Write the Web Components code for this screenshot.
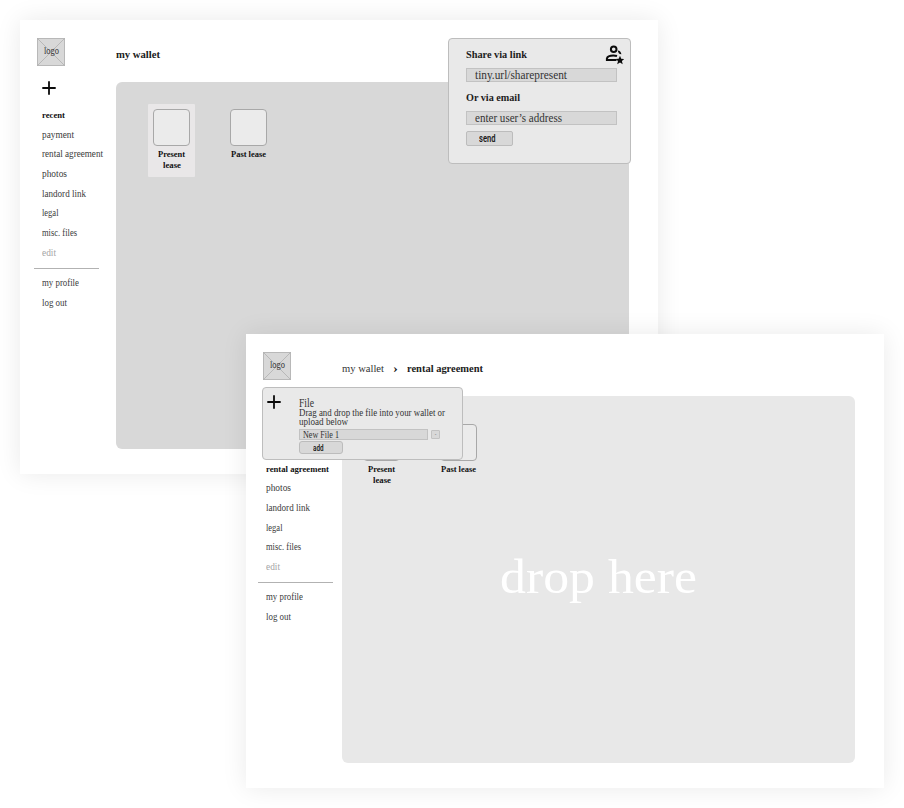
<!DOCTYPE html>
<html lang="en">
<head>
<meta charset="utf-8">
<title>my wallet</title>
<style>
html,body{margin:0;padding:0}
body{width:904px;height:808px;overflow:hidden;background:#fff;font-family:"Liberation Serif","Times New Roman",serif;color:#333}
wallet-desktop{display:block}
</style>
</head>
<body>
<wallet-desktop></wallet-desktop>
<script>
const define=(name,html,after)=>{
  const t=document.createElement('template');
  t.innerHTML=html;
  customElements.define(name,class extends HTMLElement{
    connectedCallback(){
      if(this.shadowRoot)return;
      this.attachShadow({mode:'open'}).append(t.content.cloneNode(true));
      if(after)after.call(this,this.shadowRoot);
    }
  });
};

/* A single line of text condensed or expanded to a set width. */
define('fit-text',`
<style>:host{display:block;white-space:nowrap;flex:none}span{display:inline-block;transform-origin:0 50%}</style>
<span><slot></slot></span>`,function(root){
  const w=+this.getAttribute('w'),s=+this.getAttribute('s'),span=root.querySelector('span');
  this.style.fontSize=s+'px';
  this.style.width=w+'px';
  span.style.transform='scaleX('+w/span.getBoundingClientRect().width+')';
});

define('wallet-logo',`
<style>
:host{display:grid;place-items:center;width:28px;height:28px;flex:none;line-height:12px}
svg,fit-text{grid-area:1/1}
fit-text{margin-bottom:2px}
</style>
<svg width="28" height="28" viewBox="0 0 28 28"><rect x=".5" y=".5" width="27" height="27" fill="#d8d8d8" stroke="#b8b8b8"/><path d="M.5.5l27 27M27.5.5l-27 27" stroke="#aaa" stroke-width=".7"/></svg>
<fit-text s="10" w="15">logo</fit-text>`);

define('plus-icon',`
<style>:host{display:block;width:14px;height:14px}svg{display:block}</style>
<svg width="14" height="14" viewBox="0 0 14 14"><path d="M7 .3v13.4M.3 7h13.4" stroke="#0b0b0b" stroke-width="1.8"/></svg>`);

define('share-icon',`
<style>:host{display:block;width:19px;height:20px}svg{display:block}</style>
<svg width="19" height="20" viewBox="0 0 19 20"><g fill="none" stroke="#0b0b0b" stroke-width="2"><circle cx="8.7" cy="4.3" r="2.8"/><path d="M11.5 14.9H1.9V13.4C2.4 11.4 5.4 10.4 8.4 10.4c1.4 0 2.5.2 3.6.6"/></g><path d="M12.8 5.4c2 .2 3.2 1.4 3.6 3.8-2.4-.1-3.2-1.6-3.6-3.8z" fill="#0b0b0b"/><path d="M15 10.8l1.2 3 3.2.2-2.5 2 .8 3.2-2.7-1.7-2.8 1.7.8-3.2-2.5-2 3.2-.2z" fill="#0b0b0b"/></svg>`);

define('nav-item',`
<style>
:host{display:block;height:19.7px;line-height:19.7px;color:#3a3a3a}
:host([active]){font-weight:bold;color:#111}
:host([muted]){color:#a5a5a5}
</style><slot></slot>`);

define('side-nav',`
<style>
:host{display:block;box-sizing:border-box;width:96px}
.g{padding-left:var(--inset,22px)}
hr{border:0;height:1px;background:#b2b2b2;margin:4px 0 5.5px var(--rule-start,14px);width:var(--rule,65px)}
</style>
<div class="g"><slot></slot></div><hr><div class="g"><slot name="account"></slot></div>`);

define('file-tile',`
<style>
:host{display:flex;flex-direction:column;align-items:center;width:47px;height:73px;box-sizing:border-box;padding-top:5px;font-weight:bold;color:#111;line-height:10.5px}
:host([selected]){background:#e9e7e8;border-radius:1px}
i{display:block;box-sizing:border-box;width:37px;height:37px;border:1px solid #a8a8a8;border-radius:4px;background:#ebebeb;margin-bottom:3px;flex:none}
</style>
<i></i><slot></slot>`);

define('wallet-window',`
<style>
:host{display:grid;grid-template-columns:96px 513px;grid-template-rows:62px 367px;width:638px;height:454px;background:#fff;box-shadow:0 0 24px rgba(0,0,0,.085)}
.logo{padding:17.5px 0 0 17px}
.crumbs{display:flex;align-items:center;padding-top:6px;line-height:14px;color:#333}
.nav{padding-top:var(--nav-top,0)}
.panel{display:flex;flex-direction:column;box-sizing:border-box;border-radius:6px;background:var(--panel,#d8d8d8)}
.files{display:flex;gap:29.5px;padding:22px 0 0 var(--files,32px)}
</style>
<div class="logo"><wallet-logo></wallet-logo></div>
<div class="crumbs"><slot name="crumbs"></slot></div>
<div class="nav"><slot name="nav"></slot></div>
<div class="panel"><div class="files"><slot name="files"></slot></div><slot name="drop"></slot></div>`);

define('text-box',`
<style>:host{display:flex;align-items:center;box-sizing:border-box;border:1px solid #c2c2c2;background:#d8d8d8;color:#333;line-height:12px}</style><slot></slot>`);

define('push-button',`
<style>:host{display:flex;align-items:center;justify-content:center;box-sizing:border-box;border:1px solid #bcbcbc;border-radius:2px;background:#d8d8d8;color:#1a1a1a;font-family:Roboto,sans-serif;font-weight:600;line-height:11px}</style><slot></slot>`);

define('share-popover',`
<style>
:host{display:block;box-sizing:border-box;width:183px;height:126px;border:1px solid #bdbdbd;border-radius:4px;background:#e9e9e9;padding:8px 13px 0 17px}
h3{margin:0;font-weight:bold;color:#1c1c1c;line-height:14px}
.top{display:flex;justify-content:space-between;margin-right:-7px;height:21px}
share-icon{margin-top:-2px}
text-box{width:151px;height:14px;padding-left:8px}
.second{margin:8px 0 7px}
push-button{width:47px;height:15px;margin-top:6px;padding-right:5px}
</style>
<div class="top"><h3><fit-text s="10.7" w="61">Share via link</fit-text></h3><share-icon></share-icon></div>
<text-box><fit-text s="11.5" w="92">tiny.url/sharepresent</fit-text></text-box>
<h3 class="second"><fit-text s="10.7" w="54">Or via email</fit-text></h3>
<text-box><fit-text s="11.5" w="87">enter user’s address</fit-text></text-box>
<push-button><fit-text s="11" w="16.5">send</fit-text></push-button>`);

define('upload-popover',`
<style>
:host{display:flex;box-sizing:border-box;width:201px;height:73px;border:1px solid #bdbdbd;border-radius:4px;background:#e9e9e9;padding:0 0 0 4px;color:#333}
plus-icon{margin:7px 18px 0 0;flex:none}
.body{padding-top:9px}
.file{line-height:12px}
.help{line-height:9px}
.row{display:flex;gap:3px;margin-top:2px}
text-box{width:129px;height:11px;padding-left:3px}
.more{width:9px;height:9px;padding:0;justify-content:center;margin-top:1px;border-radius:1px;font-size:5px}
push-button{width:44px;height:13px;margin-top:1px;border-radius:3px;padding-right:5px}
</style>
<plus-icon></plus-icon>
<div class="body">
<div class="file"><fit-text s="11.5" w="15">File</fit-text></div>
<div class="help"><fit-text s="9.4" w="146">Drag and drop the file into your wallet or</fit-text><fit-text s="9.4" w="49">upload below</fit-text></div>
<div class="row"><text-box><fit-text s="9.4" w="36">New File 1</fit-text></text-box><text-box class="more">-</text-box></div>
<push-button><fit-text s="9.3" w="10.5">add</fit-text></push-button>
</div>`);

define('wallet-desktop',`
<style>
:host{display:block;position:relative;width:904px;height:808px}
.a,.b,share-popover,upload-popover{position:absolute}
.a{left:20px;top:20px}
.b{left:246px;top:334px;--panel:#e8e8e8;--nav-top:63.7px;--inset:20px;--rule-start:12px;--rule:75px;--files:16px}
share-popover{left:448px;top:38px}
upload-popover{left:262px;top:387px}
plus-icon{margin:-1px 0 11px}
.sep{padding:0 9px}
.drop{color:#fff;line-height:54px;padding:58px 0 0 158px}
b{color:#1c1c1c}
.low{margin-top:1px}
</style>
<wallet-window class="a">
  <b slot="crumbs"><fit-text s="10.7" w="44">my wallet</fit-text></b>
  <side-nav slot="nav">
    <plus-icon></plus-icon>
    <nav-item active><fit-text s="9" w="23">recent</fit-text></nav-item>
    <nav-item><fit-text s="9.3" w="32">payment</fit-text></nav-item>
    <nav-item><fit-text s="9.3" w="61">rental agreement</fit-text></nav-item>
    <nav-item><fit-text s="9.3" w="25">photos</fit-text></nav-item>
    <nav-item><fit-text s="9.3" w="44">landord link</fit-text></nav-item>
    <nav-item><fit-text s="9.3" w="16.5">legal</fit-text></nav-item>
    <nav-item><fit-text s="9.3" w="35">misc. files</fit-text></nav-item>
    <nav-item muted><fit-text s="9.3" w="14">edit</fit-text></nav-item>
    <nav-item slot="account"><fit-text s="9.3" w="37">my profile</fit-text></nav-item>
    <nav-item slot="account"><fit-text s="9.3" w="25">log out</fit-text></nav-item>
  </side-nav>
  <file-tile slot="files" selected><fit-text s="8.7" w="27">Present</fit-text><fit-text s="8.7" w="18">lease</fit-text></file-tile>
  <file-tile slot="files"><fit-text s="8.7" w="35">Past lease</fit-text></file-tile>
</wallet-window>
<share-popover></share-popover>
<wallet-window class="b">
  <fit-text slot="crumbs" s="11.2" w="42">my wallet</fit-text>
  <b slot="crumbs" class="sep"><fit-text s="12" w="5">›</fit-text></b>
  <b slot="crumbs"><fit-text s="10.7" w="76">rental agreement</fit-text></b>
  <side-nav slot="nav">
    <nav-item active><fit-text s="9" w="63">rental agreement</fit-text></nav-item>
    <nav-item><fit-text s="9.3" w="25">photos</fit-text></nav-item>
    <nav-item><fit-text s="9.3" w="44">landord link</fit-text></nav-item>
    <nav-item><fit-text s="9.3" w="16.5">legal</fit-text></nav-item>
    <nav-item><fit-text s="9.3" w="35">misc. files</fit-text></nav-item>
    <nav-item muted><fit-text s="9.3" w="14">edit</fit-text></nav-item>
    <nav-item slot="account"><fit-text s="9.3" w="37">my profile</fit-text></nav-item>
    <nav-item slot="account"><fit-text s="9.3" w="25">log out</fit-text></nav-item>
  </side-nav>
  <file-tile slot="files" class="low"><fit-text s="8.7" w="27">Present</fit-text><fit-text s="8.7" w="18">lease</fit-text></file-tile>
  <file-tile slot="files" class="low"><fit-text s="8.7" w="35">Past lease</fit-text></file-tile>
  <div slot="drop" class="drop"><fit-text s="47.5" w="197">drop here</fit-text></div>
</wallet-window>
<upload-popover></upload-popover>`);
</script>
</body>
</html>
